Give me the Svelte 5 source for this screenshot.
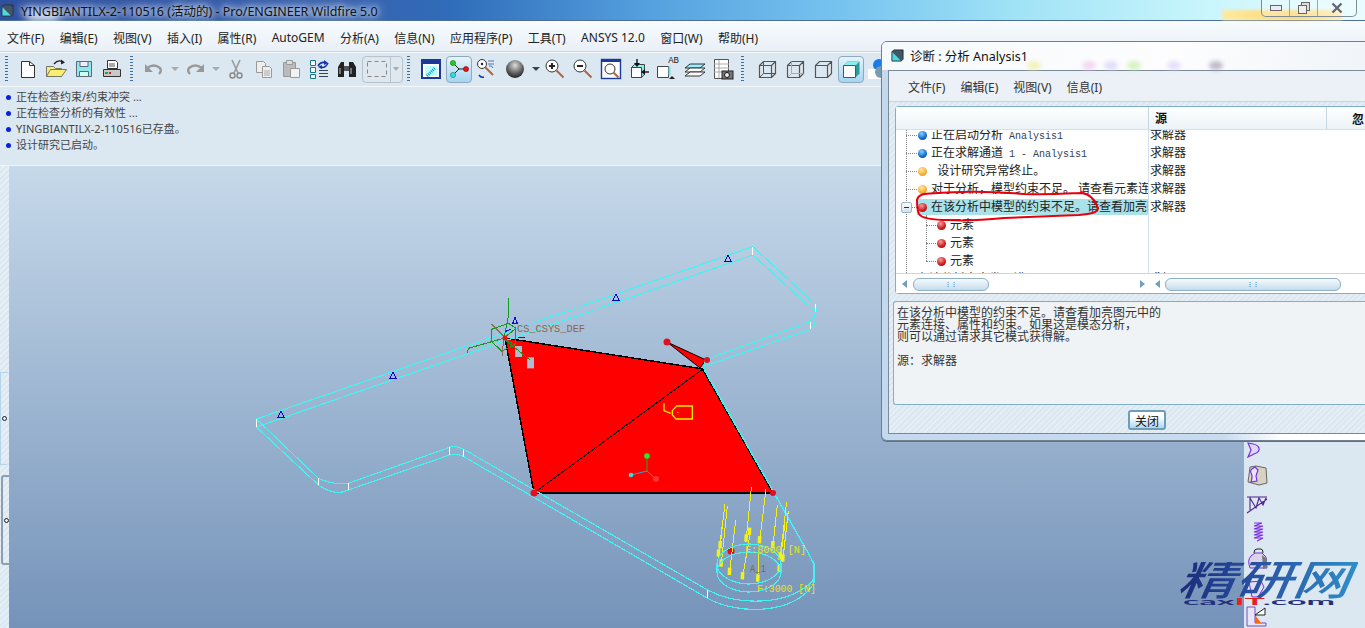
<script>
  const menus = ['文件(F)','编辑(E)','视图(V)','插入(I)','属性(R)','AutoGEM','分析(A)','信息(N)','应用程序(P)','工具(T)','ANSYS 12.0','窗口(W)','帮助(H)'];
  const messages = ['正在检查约束/约束冲突 ...','正在检查分析的有效性 ...','YINGBIANTILX-2-110516已存盘。','设计研究已启动。'];
  const dialogMenus = ['文件(F)','编辑(E)','视图(V)','信息(I)'];
  const rows = [
    { ball:'blue', text:'正在启动分析', mono:'Analysis1', src:'求解器' },
    { ball:'blue', text:'正在求解通道', mono:'1 - Analysis1', src:'求解器' },
    { ball:'orange', text:'\u00a0\u00a0设计研究异常终止。', src:'求解器' },
    { ball:'orange', text:'对于分析，模型约束不足。 请查看元素连接、属性和约束。', src:'求解器' },
    { ball:'red', text:'在该分析中模型的约束不足。请查看加亮图元中的', src:'求解器', sel:true },
    { ball:'red', text:'元素', child:true, src:'' },
    { ball:'red', text:'元素', child:true, src:'' },
    { ball:'red', text:'元素', child:true, src:'' },
    { ball:'none', text:'在该分析中未发现错误', src:'求解器' }
  ];
  const arrows = [[274,22,258,185],[318,28,298,190],[195,72,175,230],[202,78,183,260],[188,130,180,205],[227,120,208,285],[272,150,247,298],[352,75,338,205],[380,65,360,240],[385,92,368,245],[375,130,357,275],[297,215,293,305],[268,160,268,165]];
  const sparkTris = [[281,414],[393,375],[616,297],[728,258]];
  const ticks = [[43,537,43,561],[205,715,205,735],[283,730,283,750],[548,622,548,645],[585,628,585,650],[1222,1050,1222,1075],[1503,192,1503,215],[1490,245,1490,268],[1340,20,1340,45]];
</script>

<div class="app">
  <header class="title">
    <svg class="cube" viewBox="0 0 14 14"><path d="M1 3h10v10H1z" fill="#4fd8d8" stroke="#234"/><path d="M1 3l2-2h10v10l-2 2M11 3l2-2" fill="#456" stroke="#234"/></svg>
    <span class="title-text">YINGBIANTILX-2-110516 (活动的) - Pro/ENGINEER Wildfire 5.0</span>
    <div class="glow"></div>
    <div class="win">
      <span class="wb min"><svg viewBox="0 0 12 6" width="12" height="6"><rect x=".5" y=".5" width="11" height="5" fill="#e8eef4" stroke="#666"/></svg></span>
      <span class="wb res"><svg viewBox="0 0 12 12" width="12" height="12"><rect x="3.5" y=".5" width="8" height="8" fill="#ddd" stroke="#666"/><rect x=".5" y="3.5" width="8" height="8" fill="#eee" stroke="#666"/></svg></span>
      <span class="wb cls"><svg viewBox="0 0 12 12" width="12" height="12"><path d="M1.5 1.5l9 9M10.5 1.5l-9 9" stroke="#667" stroke-width="2.4"/></svg></span>
    </div>
  </header>

  <nav class="menu">
    {#each menus as m}<span>{m}</span>{/each}
  </nav>

  <div class="toolbar">
    <i class="sep first"></i>
    <span class="s"><svg viewBox="0 0 22 22"><path d="M4.500 3.500h8l5 4v12h-13z" fill="#fff" stroke="#333"/><path d="M12.500 3.500v4h5" fill="none" stroke="#333"/></svg></span>
    <span class="s"><svg viewBox="0 0 22 22"><path d="M1.500 18.500v-10h7l2 2h6v8z" fill="#f5e98a" stroke="#776"/><path d="M1.500 18.500l4-7h16l-5 7z" fill="#f8ee70" stroke="#776"/><path d="M9 6q4-5 9-2" fill="none" stroke="#222" stroke-width="1.4"/><path d="M16 1.5l4 3-4 2z" fill="#222"/></svg></span>
    <span class="s"><svg viewBox="0 0 22 22"><path d="M3.500 3.500h15v15h-15z" fill="#8fe8ea" stroke="#5a6a7a"/><path d="M7 3.500h8v5h-8z" fill="#eef" stroke="#5a6a7a"/><path d="M6.500 13.500h9v5h-9z" fill="#cfe" stroke="#5a6a7a"/></svg></span>
    <span class="s"><svg viewBox="0 0 22 22"><path d="M6.500 2.500h8l2 2v6h-10z" fill="#fff" stroke="#333"/><path d="M8 6h6M8 8h6" stroke="#555"/><path d="M2.500 11.500h17v7h-17z" fill="#c8c8c8" stroke="#333"/><path d="M4 15h3" stroke="#2a2" stroke-width="2"/><path d="M8 15h2" stroke="#c22" stroke-width="2"/></svg></span>
    <i class="sep"></i>
    <span class="s"><svg viewBox="0 0 22 22"><path d="M4 10q7-5 13 0q2 3-1 6" fill="none" stroke="#999" stroke-width="2.4"/><path d="M2 6v8h8z" fill="#999"/></svg></span>
    <span class="a grey"></span>
    <span class="s back"><svg viewBox="0 0 22 22"><path d="M18 10q-7-5-13 0q-2 3 1 6" fill="none" stroke="#999" stroke-width="2.4"/><path d="M20 6v8h-8z" fill="#999"/></svg></span>
    <span class="a grey"></span>
    <span class="s back"><svg viewBox="0 0 22 22"><path d="M7 2l6 13M15 2l-6 13" stroke="#999" stroke-width="1.6"/><circle cx="7.5" cy="17.5" r="2.5" fill="none" stroke="#888" stroke-width="1.4"/><circle cx="14.5" cy="17.5" r="2.5" fill="none" stroke="#888" stroke-width="1.4"/></svg></span>
    <span class="s"><svg viewBox="0 0 22 22"><path d="M3.500 3.500h7l2 2v9h-9z" fill="#eee" stroke="#999"/><path d="M9.500 8.500h7l2 2v9h-9z" fill="#eee" stroke="#999"/><path d="M11 13h6M11 15h6M11 17h6" stroke="#aaa"/></svg></span>
    <span class="s back"><svg viewBox="0 0 22 22"><path d="M3.500 4.500h12v14h-12z" fill="#bbb" stroke="#999"/><path d="M6.500 2.500h6v4h-6z" fill="#ddd" stroke="#999"/><path d="M10.500 10.500h9v9h-9z" fill="#f2f2f2" stroke="#999"/></svg></span>
    <span class="s"><svg viewBox="0 0 22 22"><path d="M2.500 2.500h5v5h-5zM2.500 9.500h5v5h-5zM2.500 16.500h5v4h-5z" fill="#fff" stroke="#178"/><path d="M11 12.500h9M11 15.500h9M11 18.500h9" stroke="#345"/><path d="M10 8q3-5 8-3M20 5q-3 6-8 4" fill="none" stroke="#13a" stroke-width="1.6"/><path d="M16 2l4 3-4 2zM14 7l-4 2 4 2z" fill="#13a"/></svg></span>
    <span class="s"><svg viewBox="0 0 22 22"><path d="M2 9l3-5h3v15H2zM13 4h4l3 5v10h-7z" fill="#222"/><path d="M8 8h5v5H8z" fill="#555"/><path d="M4 10v6M15 10v6" stroke="#ccc"/></svg></span>
    <span class="combo"><span class="cb-main"><svg viewBox="0 0 20 16" width="20" height="16"><rect x=".5" y=".5" width="19" height="15" fill="none" stroke="#888" stroke-dasharray="4 3"/></svg></span><span class="cb-arrow"></span></span>
    <i class="sep"></i>
    <span class="s"><svg viewBox="0 0 22 22"><rect x="2" y="2" width="18" height="18" fill="#fff" stroke="#1a3a9a" stroke-width="2"/><path d="M3 3h16v3H3z" fill="#1a3a9a"/><path d="M5 8h12v10H5z" fill="#bff"/><path d="M7 18l8-8" stroke="#09c" stroke-width="3" stroke-dasharray="1 1"/></svg></span>
    <span class="s on"><svg viewBox="0 0 22 22"><path d="M5 5l6 6-6 6M11 11h7" fill="none" stroke="#222"/><circle cx="5" cy="5" r="2.600" fill="#2c2" stroke="#060" stroke-width=".5"/><circle cx="5" cy="17" r="2.600" fill="#3dd" stroke="#066" stroke-width=".5"/><circle cx="18" cy="11" r="2.600" fill="#e11" stroke="#600" stroke-width=".5"/></svg></span>
    <span class="s"><svg viewBox="0 0 22 22"><circle cx="6" cy="6" r="4.500" fill="#fff" stroke="#333"/><circle cx="6" cy="6" r="1.200" fill="#222"/><path d="M12 3h6M12 6h6" stroke="#57a"/><path d="M9 9l8 8" stroke="#a64" stroke-width="2"/><path d="M3 17q2 3 5 2" fill="none" stroke="#13a" stroke-width="1.600"/><path d="M13 8q3-1 4 2" fill="none" stroke="#57a"/></svg></span>
    <span class="s"><svg viewBox="0 0 22 22"><defs><radialGradient id="sph" cx=".5" cy=".3" r=".7"><stop offset="0" stop-color="#ddd"/><stop offset=".6" stop-color="#666"/><stop offset="1" stop-color="#222"/></radialGradient></defs><circle cx="11" cy="11" r="9" fill="url(#sph)"/></svg></span>
    <span class="a small"></span>
    {#each ['in','out'] as z}
      <span class="s"><svg viewBox="0 0 22 22"><circle cx="8" cy="8" r="6" fill="#fff" stroke="#333"/><path d="M5 8h6" stroke="#222" stroke-width="2"/>{#if z==='in'}<path d="M8 5v6" stroke="#222" stroke-width="2"/>{/if}<path d="M12.500 12.500l7 7" stroke="#a64" stroke-width="2"/></svg></span>
    {/each}
    <span class="s"><svg viewBox="0 0 22 22"><rect x="1.500" y="1.500" width="19" height="19" fill="#fff" stroke="#1a3a9a" stroke-width="1.400"/><path d="M2 2h18v2H2z" fill="#1a3a9a"/><circle cx="10" cy="11" r="5" fill="#fff" stroke="#333"/><path d="M13.500 14.500l5 5" stroke="#a64" stroke-width="2"/></svg></span>
    <span class="s"><svg viewBox="0 0 22 22"><path d="M3.500 9.500h10v10h-10z" fill="#fff" stroke="#444"/><path d="M3.500 9.500l3-3h10v10l-3 3v-10z" fill="#8ee" stroke="#444"/><path d="M9 1v6" stroke="#111" stroke-width="1.400"/><path d="M6 5h6l-3 4z" fill="#111"/><path d="M21 14h-5" stroke="#111" stroke-width="1.400"/><path d="M17 11v6l-4-3z" fill="#111"/></svg></span>
    <span class="s"><span class="ab">AB</span><svg viewBox="0 0 22 22"><path d="M1.500 8.500h11v11h-11z" fill="#fff" stroke="#444"/><path d="M12.500 8.500h2v9h-2z" fill="#7dd"/><path d="M13 21h6l-3-3z" fill="#222"/></svg></span>
    <span class="s"><svg viewBox="0 0 22 22"><path d="M1 10l5-4h15l-5 4z" fill="#9ef" stroke="#333"/><path d="M1 14l5-4h15l-5 4z" fill="#fff" stroke="#333"/><path d="M1 18l5-4h15l-5 4z" fill="#fff" stroke="#333"/></svg></span>
    <span class="s"><svg viewBox="0 0 22 22"><path d="M2.500 1.500h14v19h-14z" fill="#fff" stroke="#555"/><path d="M2 6h15M2 10h15M2 14h15M7 2v18" stroke="#aaa"/><rect x="10" y="13" width="11" height="8" fill="#777" stroke="#222"/><circle cx="15" cy="17" r="2.500" fill="#eee" stroke="#111"/></svg></span>
    <i class="sep"></i>
    {#each [0,1,2] as c}
      <span class="s" class:gap8={c===0}><svg viewBox="0 0 22 22"><path d="M3.500 7.500h12v12h-12zM3.500 7.500l4-4h12v12l-4 4M15.500 7.500l4-4" fill="none" stroke="#555" stroke-width="1.200"/>{#if c<2}<path d="M7.500 3.500v12h12M3.500 19.500l4-4" fill="none" stroke={c===0?'#555':'#aaa'}/>{/if}</svg></span>
    {/each}
    <span class="s on"><svg viewBox="0 0 22 22"><path d="M3.500 7.500l4-4h12v12l-4 4z" fill="#2c9a9a"/><path d="M3.500 7.500l4-4h12l-4 4z" fill="#8ee"/><path d="M3.500 7.500h12v12h-12z" fill="#fff" stroke="#555"/></svg></span>
    <span class="s"><svg viewBox="0 0 22 22"><circle cx="11" cy="7" r="6" fill="#1a7ae8"/><path d="M0 11h22v10H0z" fill="#fff"/><circle cx="13" cy="14" r="6" fill="#7a9ab0"/></svg></span>
  </div>

  <section class="msgs">
    {#each messages as m}<div class="msg"><i></i>{m}</div>{/each}
  </section>

  <main class="work">
    <div class="strip">
      <div class="handle blue"><b></b></div>
      <div class="handle grey"><b></b></div>
    </div>
    <svg class="canvas" viewBox="9 166 1235 462" width="1235" height="462">
      <defs><linearGradient id="bg" x1="0" y1="0" x2="0" y2="1"><stop offset="0" stop-color="#c6d9ea"/><stop offset="1" stop-color="#7593b9"/></linearGradient></defs>
      <rect x="9" y="166" width="1235" height="462" fill="url(#bg)"/>

      <polygon points="505,338 703,369 773,492 534,493" fill="#f00"/>
      <polygon points="667,342 700,368 706,360" fill="#f00" stroke="#000" stroke-width="1"/>
      <g class="crisp">
        <path d="M505 338L703 369M505 338L534 493M534 493H773" stroke="#000" stroke-width="1.500" fill="none"/>
        <path d="M534 493L703 369" stroke="#000" fill="none"/>
        <path d="M703 369L773 492" stroke="#000" stroke-width="2.500" fill="none"/>
      </g>

      <g transform="translate(240 240) scale(.38265 .33333)" class="wire">
        <path d="M43 537L1340 20L1503 192Q1512 220 1490 245L1215 360"/>
        <path d="M43 561L1340 45L1503 215Q1510 250 1490 268L1215 378"/>
        <path d="M43 537L205 715Q240 735 283 730L548 622Q565 615 585 628L1222 1050C1300 1098 1430 1098 1495 1025C1510 995 1498 965 1488 945L1212 385"/>
        <path d="M43 561L205 735Q250 770 283 750L548 645Q570 640 585 650L1222 1075C1300 1125 1450 1125 1500 1030"/>
        <path d="M1500 970V1030M1214 360V395M1500 970L1218 400"/>
        {#each ticks as t}<line x1={t[0]} y1={t[1]} x2={t[2]} y2={t[3]} class="tick"/>{/each}
      </g>

      {#each sparkTris as t}
        <path d="M{t[0]} {t[1]-3}l-3 6h6z" fill="none" stroke="#00c" class="crisp"/>
      {/each}

      <g transform="translate(440 280) scale(.33333)" class="csys">
        <rect x="225" y="198" width="21" height="33" fill="#aebdcf" stroke="none"/>
        <rect x="261" y="232" width="21" height="33" fill="#aebdcf" stroke="none"/>
        <path d="M155 148L205 130L228 145L225 195L185 213L155 185zM190 175L228 145M190 175L225 195M205 55V110L192 175M85 205L190 175M85 205L82 218M190 175L270 240"/>
        <path class="brown" d="M155 132L200 178M190 170L188 228"/>
        <path class="blue" d="M225 112L218 130H232zM195 155L212 148M235 172H256"/>
      </g>
      <circle cx="505" cy="338" r="2.500" fill="#e11"/>
      <text x="517" y="332" class="brown-t" textLength="68" lengthAdjust="spacingAndGlyphs">CS_CSYS_DEF</text>

      <circle cx="667" cy="342" r="3.500" fill="#e01020"/>
      <circle cx="707" cy="360" r="3" fill="#e01020"/>
      <circle cx="534" cy="493" r="3.500" fill="#e01020"/>
      <circle cx="773" cy="493" r="3" fill="#e01020"/>
      <circle cx="731" cy="551" r="3.500" fill="#e01020"/>

      <g transform="translate(440 280) scale(.33333)" class="tag">
        <path d="M672 370V392L692 400"/>
        <path d="M697 392L710 378H757V417H708L697 405z"/>
        <path d="M712 397h3"/>
      </g>

      <path d="M631 475L647 471" stroke="#2ad" fill="none"/>
      <path d="M647 456V471" stroke="#2a2" fill="none"/>
      <path d="M647 471L656 479" stroke="#e55" fill="none"/>
      <circle cx="647" cy="456" r="2.800" fill="#2e2"/>
      <circle cx="631" cy="475" r="2.300" fill="#3dd"/>
      <circle cx="656" cy="479" r="3" fill="#f33"/>

      <g transform="translate(660 480) scale(.33333)">
        {#each arrows as a}
          <line x1={a[0]} y1={a[1]} x2={a[2]} y2={a[3]} class="arr"/>
          <line x1={a[2]+1} y1={a[3]-22} x2={a[2]} y2={a[3]} class="head"/>
        {/each}
      </g>
      <g class="wire">
        <ellipse cx="749" cy="564" rx="32" ry="20"/>
        <ellipse cx="749" cy="572" rx="32" ry="20"/>
        <path d="M717 564V572M781 564V572"/>
      </g>
      <text x="745" y="553" class="yel" textLength="61" lengthAdjust="spacingAndGlyphs">F:8000 [N]</text>
      <text x="757" y="592" class="yel" textLength="59" lengthAdjust="spacingAndGlyphs">F:3000 [N]</text>
      <text x="750" y="572" class="brown-t" textLength="16" lengthAdjust="spacingAndGlyphs">A_1</text>
    </svg>
    <aside class="side">
      <svg viewBox="1244 441 121 187" width="121" height="187">
        <path d="M1248 443q10 1 11 5t-5 6l-6 3 3-7z" fill="#dcd8f4" stroke="#7a2ce0" stroke-width="1.200"/>
        <path d="M1250 467l6-1 10 2 1 15-8 2-11-3 1-7z" fill="#d8d2c0" stroke="#666"/>
        <path d="M1255 467l3 3-2 6 1 5-6 1q2-6 0-9t4-6z" fill="#e8e4fa" stroke="#7a2ce0" stroke-width="1.200"/>
        <path d="M1247 497h20M1250 497v14M1250 498l6 10 3-10 4 7 3-7M1247 513l20-14" fill="none" stroke="#502090" stroke-width="1.100"/>
        <path d="M1254 523h8l-8 3h9l-9 3h9l-9 3h9l-9 3h9l-9 3h9l-6 3" fill="none" stroke="#7a2ce0" stroke-width="1.100"/>
        <path d="M1250 568q-3-8 1-12l4-3h7l4 4 1 11z" fill="#d9d4ea" stroke="#7a2ce0"/>
        <path d="M1262 555l5 4v9l-4 1z" fill="#777"/>
        <path d="M1254 553q0-4 3-4h4q2 0 2 4" fill="none" stroke="#222"/>
        <path d="M1249 582l12-1 3 6-6 10h-6z" fill="#e0dcf4" stroke="#7a2ce0"/>
        <path d="M1247 607h8v16h11v3h-19z" fill="#e8e4fa" stroke="#7a4cc0"/>
        <path d="M1255 623v-8l6 8z" fill="#f60"/>
        <path d="M1255 615l10-7v7z" fill="#fff" stroke="#222"/>
      </svg>
    </aside>
  </main>

  <section class="dialog">
    <div class="dlg-title">
      <svg class="dcube" viewBox="0 0 14 14"><path d="M1 3h10v10H1z" fill="#4fd8d8" stroke="#234"/><path d="M1 3l2-2h10v10l-2 2M11 3l2-2" fill="#456" stroke="#234"/></svg>
      <span>诊断 : 分析 Analysis1</span>
      <div class="blobs">
        <i style="left:145px;background:#f0f0a0"></i><i style="left:200px;background:#f0c8f0"></i><i style="left:222px;background:#d8d0f8"></i><i style="left:245px;background:#c8f0a8"></i><i style="left:285px;background:#dcd4f8"></i><i style="left:327px;background:#a8a0b8"></i>
      </div>
    </div>
    <div class="dlg-inner">
      <div class="dlg-menu">
        {#each dialogMenus as m}<span>{m}</span>{/each}
      </div>
      <div class="dlg-body">
        <div class="panel">
          <div class="thead"><div class="th1"></div><div class="th2">源</div><div class="th3">忽</div></div>
          <div class="tbody">
            <i class="vline root"></i>
            <i class="vline kids"></i>
            <i class="coldiv"></i>
            <i class="minus"></i>
            {#each rows as r}
              <div class="row">
                <div class="c1">
                  <i class="hdot" class:kid={r.child}></i>
                  <div class="lab" class:sel={r.sel} class:child={r.child}>
                    {#if r.ball !== 'none'}<i class="ball {r.ball}"></i>{/if}
                    <span class="t">{r.text}{#if r.mono}<span class="mono">&nbsp;{r.mono}</span>{/if}</span>
                  </div>
                </div>
                <div class="c2">{r.src}</div>
              </div>
            {/each}
            <svg class="scribble" viewBox="0 0 190 36" width="190" height="36"><path d="M3 12C4 7 8 6 16 5.500C50 3 70 3 110 6C140 7 160 5 168 5C176 6 181 12 184 20C184 25 175 26 165 27C140 28 110 29 90 30C70 32 50 33 35 32C20 32 8 31 5 26C3 22 3 16 3 12z" fill="none" stroke="#e8000c" stroke-width="2"/></svg>
          </div>
          <div class="sbars">
            <div class="sb left"><i class="la"></i><i class="thumb">⋮⋮</i><i class="ra"></i></div>
            <div class="sb right"><i class="la"></i><i class="thumb">⋮⋮</i></div>
          </div>
        </div>
        <div class="detail">在该分析中模型的约束不足。请查看加亮图元中的<br>元素连接、属性和约束。如果这是模态分析，<br>则可以通过请求其它模式获得解。<br><br>源：求解器</div>
        <div class="foot"><button>关闭</button></div>
      </div>
    </div>
  </section>

  <svg class="logo" viewBox="0 0 180 48" width="180" height="48">
    <defs><linearGradient id="lg" x1="0" y1="0" x2="1" y2="0"><stop offset="0" stop-color="#1a2a78"/><stop offset=".5" stop-color="#2a58a8"/><stop offset="1" stop-color="#2f8fc8"/></linearGradient></defs>
    <text x="2" y="33" class="logo-cn" textLength="172" lengthAdjust="spacingAndGlyphs" transform="skewX(-6)">精研网</text>
    <text x="5" y="43" class="logo-en" textLength="152" lengthAdjust="spacingAndGlyphs">cax<tspan fill="#e82020">IT</tspan>.com</text>
  </svg>
</div>

<style>
  :global(body){margin:0;background:#dce8f1}
  .app{position:relative;width:1365px;height:628px;overflow:hidden;display:flex;flex-direction:column;font:12px "Noto Sans","Noto Sans CJK SC",sans-serif;color:#333;background:#dce8f1}

  .title{position:relative;height:20px;flex:none;display:flex;align-items:center;padding-left:1px;border-bottom:1px solid #4f7096;background:linear-gradient(90deg,#2f4f9f 0,#3a62ae 25%,#2f6cb9 33%,#56a2e0 48%,#78c4f0 62%,#9fe2f6 74%,#c8f5fc 88%,#e9fcff 100%)}
  .title::before{content:"";position:absolute;left:28px;top:12px;width:30px;height:8px;background:#fff;filter:blur(4px)}
  .cube{width:13px;height:13px;margin-right:7px}
  .title-text{color:#111;font-size:12.500px;text-shadow:0 0 5px #dbe8f8,0 0 9px #cfe0f6,0 0 12px #cfe0f6;position:relative;z-index:1}
  .glow{position:absolute;left:1222px;top:10px;width:120px;height:10px;background:linear-gradient(90deg,#ffe9a0,#ffd670 60%,#ffeab0);filter:blur(1.500px)}
  .win{position:absolute;z-index:2;left:1261px;top:-1px;height:17px;display:flex;border:1px solid #7f8c98;border-top:0;border-radius:0 0 5px 5px;background:rgba(255,255,255,.25)}
  .wb{display:flex;align-items:center;justify-content:center;border-left:1px solid #9aa6b0}
  .wb:first-child{border-left:0}
  .min{width:27px}.res{width:27px}.cls{width:38px}

  .menu{height:31px;box-sizing:border-box;flex:none;display:flex;align-items:center;gap:15.400px;padding:3px 0 0 7px;background:linear-gradient(#f7fbfd,#e9f0f7);border-bottom:1px solid #c9d6e2;color:#222}

  .toolbar{height:32px;flex:none;display:flex;align-items:center;padding:0 0 1px 5px;background:#dce8f1;border-top:1px solid #f6fafc;border-bottom:2px solid #f3f7fa;box-sizing:content-box}
  .sep{width:3px;height:27px;margin:0 7px 0 4px;flex:none;background:repeating-linear-gradient(#3f6f9f 0 1px,transparent 1px 3px)}
  .sep.first{margin-left:0;margin-right:6px}
  .s{position:relative;width:28px;height:28px;flex:none;display:flex;align-items:center;justify-content:center;box-sizing:border-box}
  .s svg{width:22px;height:22px}
  .back{margin-left:-1px}
  .gap8{margin-left:2px}
  .on{border:1px solid #8fa9bd;border-radius:4px;background:linear-gradient(#e6f3fb,#a6d5f2);width:26px;height:27px;margin:0 1px}
  .a{width:14px;height:28px;flex:none;position:relative}
  .a.small{width:12px}
  .a::after{content:"";position:absolute;left:3px;top:12px;border:4px solid transparent;border-top:4px solid #444;border-bottom:0}
  .a.grey::after{border-top-color:#aaa}
  .ab{position:absolute;right:2px;top:1px;font:9px "Liberation Mono",monospace;color:#222}
  .combo{width:39px;height:25px;margin-left:1px;flex:none;display:flex;border:1px solid #b5c3cf;border-radius:4px;background:#dfe8ef}
  .cb-main{flex:1;display:flex;align-items:center;justify-content:center;border-right:1px solid #b5c3cf}
  .cb-arrow{width:11px;position:relative}
  .cb-arrow::after{content:"";position:absolute;left:2px;top:10px;border:3.500px solid transparent;border-top:4px solid #aaa;border-bottom:0}

  .msgs{height:79px;flex:none;padding-top:2px;box-sizing:border-box;background:#dce8f1;border-bottom:1px solid #f0f5f9;font-size:11px;color:#444;line-height:16px;margin-top:-1px}
  .msg{display:flex;align-items:center;height:16px;padding-left:6px}
  .msg i{width:5px;height:5px;border-radius:50%;background:#0a1fe0;margin-right:5px;flex:none}

  .work{flex:1;min-height:0;display:flex}
  .strip{width:9px;flex:none;padding-top:206px;box-sizing:border-box;background:repeating-linear-gradient(135deg,#dce8f1 0 2px,#e6eff5 2px 4px)}
  .handle{height:92px;width:8px;box-sizing:border-box;display:flex;align-items:center;justify-content:center;border-radius:0 0 3px 0}
  .handle.blue{border:1px solid #b4d4ea;border-right:0;height:93px}
  .handle.grey{margin-top:10px;margin-left:1px;width:8px;height:90px;border:2px solid #8c9fb0;border-right:0;border-radius:3px 0 0 3px}
  .handle b{width:3px;height:3px;border:1px solid #222;border-radius:50%}
  .canvas{flex:none;display:block}
  .side{width:121px;flex:none;background:#dce8f1;padding-top:275px;box-sizing:border-box}
  .side svg{display:block}

  .crisp{shape-rendering:crispEdges}
  .wire{fill:none;stroke:#45f2f2;stroke-width:1.200;shape-rendering:crispEdges}
  .wire path,.wire ellipse{vector-effect:non-scaling-stroke}
  .tick{stroke:#fff;vector-effect:non-scaling-stroke}
  .csys path{fill:none;stroke:#119a22;vector-effect:non-scaling-stroke;shape-rendering:crispEdges}
  .csys path.brown{stroke:#8a6a50}
  .csys path.blue{stroke:#1010d0}
  .brown-t{font:10px "Liberation Mono",monospace;fill:#8a6648}
  .yel{font:10px "Liberation Mono",monospace;fill:#e6e610}
  .tag path{fill:none;stroke:#f4ee00;stroke-width:1.300;vector-effect:non-scaling-stroke}
  .arr{stroke:#f2f21a;vector-effect:non-scaling-stroke;shape-rendering:crispEdges}
  .head{stroke:#f2f21a;stroke-width:3.500;vector-effect:non-scaling-stroke}

  .dialog{position:absolute;left:881px;top:41px;width:490px;height:400px;box-sizing:border-box;padding:0 0 6px 6px;border:1px solid #6f7f8f;border-radius:6px;background:linear-gradient(90deg,#c4d8ee 0,#c8dcf0 70%,#ffffff 82%);box-shadow:0 1px 0 #5f7388;display:flex;flex-direction:column;overflow:hidden}
  .dlg-title{position:relative;height:28px;box-sizing:border-box;padding:0 0 2px 9px;flex:none;margin:0 0 0 -6px;display:flex;align-items:center;background:linear-gradient(100deg,#f6f9fc,#fdfdfe 60%,#f0f4f8);color:#111;font-size:12.500px}
  .dcube{width:13px;height:13px;margin-right:6px}
  .blobs i{position:absolute;top:19px;width:14px;height:9px;border-radius:50%;filter:blur(2px);opacity:.7}
  .dlg-inner{flex:1;min-height:0;margin-left:0;border:1px solid #7a8a98;border-right:0;display:flex;flex-direction:column;background:#dce8f1}
  .dlg-menu{height:31px;box-sizing:border-box;flex:none;display:flex;align-items:center;gap:15px;padding:2px 0 0 19px;background:#ebf1f7;border-bottom:1px solid #c5d5e2;color:#333}
  .dlg-body{flex:1;min-height:0;display:flex;flex-direction:column;background:repeating-linear-gradient(135deg,#dce8f1 0 2px,#e5eef5 2px 4px)}
  .panel{margin:4px 0 0 6px;height:188px;flex:none;border:1px solid #7fb0c8;border-right:0;border-radius:4px 0 0 4px;background:#fff;display:flex;flex-direction:column;box-sizing:border-box}
  .thead{height:22px;flex:none;display:flex;background:linear-gradient(#fff,#ebf3f8);border-bottom:1px solid #d5e2ec;font:bold 12px "Noto Sans CJK SC",sans-serif;color:#111;align-items:center}
  .th1{width:252px;height:100%;border-right:1px solid #c5d5e2}
  .th2{width:171px;padding-left:6px;height:100%;line-height:22px;border-right:1px solid #c5d5e2}
  .th3{padding-left:25px}
  .tbody{position:relative;height:143px;flex:none;overflow:hidden;color:#222;background:#fff}
  .row{height:18px;display:flex;margin-top:0}
  .tbody .row:nth-of-type(1){margin-top:-4px}
  .c1{position:relative;width:252px;flex:none;overflow:hidden}
  .c2{padding-left:2px;line-height:18px;white-space:nowrap}
  .lab{position:relative;margin:1px 0 1px 21px;height:16px;display:flex;align-items:center;white-space:nowrap;overflow:hidden}
  .lab.child{margin-left:40px}
  .lab.sel{background:#a9e3e9}
  .ball{width:9px;height:9px;margin:0 4px 0 1px;border-radius:50%;flex:none}
  .ball.blue{background:radial-gradient(circle at 40% 30%,#8fd0ff,#0a6ac8 60%,#063a7a)}
  .ball.orange{background:radial-gradient(circle at 40% 30%,#ffe9a8,#f6a82a 65%,#c87a10)}
  .ball.red{background:radial-gradient(circle at 40% 30%,#f0a0a0,#d01818 60%,#7a0808)}
  .t{line-height:16px}
  .mono{font:10px "Liberation Mono",monospace;color:#345}
  .hdot{position:absolute;left:10px;top:9px;width:11px;border-top:1px dotted #888}
  .hdot.kid{left:30px;width:10px}
  .vline{position:absolute;border-left:1px dotted #888;z-index:1}
  .vline.root{left:10px;top:0;height:143px}
  .vline.kids{left:30px;top:85px;height:46px}
  .coldiv{position:absolute;left:252px;top:0;height:143px;border-left:1px solid #d0e0ec;z-index:1}
  .minus{position:absolute;z-index:2;left:5px;top:72px;width:9px;height:9px;border:1px solid #9ab6c8;border-radius:2px;background:linear-gradient(#fff,#cfe0ec)}
  .minus::after{content:"";position:absolute;left:2px;top:4px;width:5px;height:1px;background:#333}
  .scribble{position:absolute;left:18px;top:58px;z-index:3;margin-top:0}
  .sbars{flex:1;display:flex;border-top:1px solid #c5d8e4;background:#fff}
  .sb{position:relative;height:100%}
  .sb.left{width:253px}.sb.right{flex:1}
  .sb .thumb{position:absolute;top:4px;height:11px;border:1px solid #8fb0c6;border-radius:6px;background:linear-gradient(#f6fafc,#c5dcec);font:normal 6px "Noto Sans",sans-serif;text-align:center;line-height:11px;color:#345;overflow:hidden}
  .left .thumb{left:17px;width:74px}
  .right .thumb{left:16px;width:174px}
  .la,.ra{position:absolute;top:6px;border:4px solid transparent}
  .la{left:6px;border-right:5px solid #6fa0c0;border-left:0}
  .ra{right:4px;border-left:5px solid #6fa0c0;border-right:0}
  .detail{margin:7px 0 0 4px;height:104px;flex:none;box-sizing:border-box;padding:4px 0 0 3px;border:1px solid #7fb0c8;border-right:0;border-radius:3px 0 0 3px;background:#eff3f6;line-height:12px;color:#333;font-family:"Noto Sans CJK SC",sans-serif}
  .foot{flex:1;display:flex;justify-content:flex-start;padding:5px 0 0 239px}
  .foot button{width:38px;height:20px;padding:0;border:2px solid #6e9db8;border-radius:3px;background:linear-gradient(#fff 30%,#aed6f2);font:12px "Noto Sans CJK SC",sans-serif;color:#111}

  .logo{position:absolute;left:1178px;top:562px;pointer-events:none}
  .logo-cn{font:italic 500 42px "Noto Sans CJK SC",sans-serif;fill:url(#lg)}
  .logo-en{font:bold 9px "Lato",sans-serif;fill:#24307a}
</style>
